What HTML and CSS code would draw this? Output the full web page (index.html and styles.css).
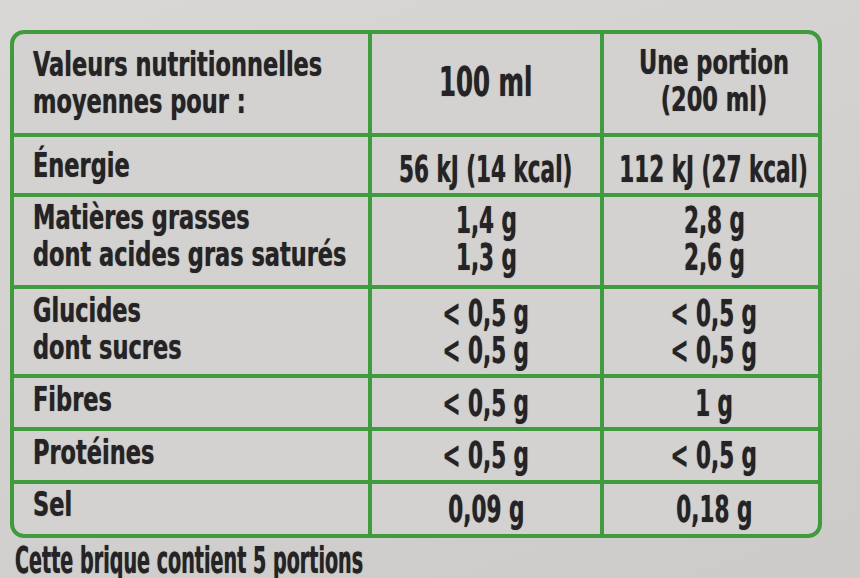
FILE: index.html
```html
<!DOCTYPE html>
<html lang="fr">
<head>
<meta charset="utf-8">
<title>Valeurs nutritionnelles</title>
<link rel="stylesheet" href="styles.css">
</head>
<body>
<div class="page">
  <div class="table">
    <div class="row r-head">
      <div class="cell lab"><span class="t">Valeurs nutritionnelles<br>moyennes pour :</span></div>
      <div class="cell val c2 mid"><span class="t big">100 ml</span></div>
      <div class="cell val c3 head3"><span class="t lbl">Une portion<br>(200 ml)</span></div>
    </div>
    <div class="row r-energy">
      <div class="cell lab"><span class="t">Énergie</span></div>
      <div class="cell val c2"><span class="t">56 kJ (14 kcal)</span></div>
      <div class="cell val c3"><span class="t">112 kJ (27 kcal)</span></div>
    </div>
    <div class="row r-fat">
      <div class="cell lab"><span class="t">Matières grasses<br>dont acides gras saturés</span></div>
      <div class="cell val c2"><span class="t">1,4 g<br>1,3 g</span></div>
      <div class="cell val c3"><span class="t">2,8 g<br>2,6 g</span></div>
    </div>
    <div class="row r-carb">
      <div class="cell lab"><span class="t">Glucides<br>dont sucres</span></div>
      <div class="cell val c2"><span class="t">&lt; 0,5 g<br>&lt; 0,5 g</span></div>
      <div class="cell val c3"><span class="t">&lt; 0,5 g<br>&lt; 0,5 g</span></div>
    </div>
    <div class="row r-fib">
      <div class="cell lab"><span class="t">Fibres</span></div>
      <div class="cell val c2"><span class="t">&lt; 0,5 g</span></div>
      <div class="cell val c3"><span class="t">1 g</span></div>
    </div>
    <div class="row r-prot">
      <div class="cell lab"><span class="t">Protéines</span></div>
      <div class="cell val c2"><span class="t">&lt; 0,5 g</span></div>
      <div class="cell val c3"><span class="t">&lt; 0,5 g</span></div>
    </div>
    <div class="row r-salt">
      <div class="cell lab"><span class="t">Sel</span></div>
      <div class="cell val c2"><span class="t">0,09 g</span></div>
      <div class="cell val c3"><span class="t">0,18 g</span></div>
    </div>
  </div>
  <p class="foot"><span class="t">Cette brique contient 5 portions</span></p>
</div>
</body>
</html>
```
FILE: styles.css
```css
html, body {
  margin: 0;
  padding: 0;
}
body {
  background: #d3d1cf;
  width: 860px;
  height: 578px;
  overflow: hidden;
  font-family: "DejaVu Sans Condensed", "DejaVu Sans", sans-serif;
  font-stretch: condensed;
  font-weight: bold;
  color: #252325;
}
.page {
  padding: 30px 0 0 10px;
  background: linear-gradient(160deg, #d9d7d5 0%, #d2d0ce 60%, #cdcbc9 100%);
  height: 548px;
}
.table {
  display: grid;
  grid-template-columns: 354px 228px 214px;
  grid-template-rows: 99px 56px 88px 85px 49px 49px 50px;
  gap: 4px;
  width: max-content;
  background: #3f9b3e;
  border: 4px solid #3f9b3e;
  border-radius: 14px;
  overflow: hidden;
}
.row {
  display: contents;
}
.cell {
  background: #d4d2d0;
  box-sizing: border-box;
  text-shadow: 0 0 1px rgba(30, 28, 30, 0.7);
}
.t {
  display: block;
  white-space: nowrap;
}
.lab {
  padding-left: 19px;
  font-size: 34px;
  line-height: 37px;
}
.lab .t {
  transform: scaleX(0.735);
  transform-origin: left top;
}
.val {
  display: flex;
  flex-direction: column;
  align-items: center;
  font-size: 38px;
  line-height: 37px;
  text-align: center;
}
.val .t {
  width: max-content;
  transform: scaleX(0.63);
  transform-origin: center top;
}
.c3 {
  padding-left: 6px;
}
.mid {
  justify-content: center;
}
.mid .t.big {
  font-size: 40px;
  transform: scaleX(0.68);
  padding-bottom: 2px;
}
.head3 .t.lbl {
  font-size: 34px;
  transform: scaleX(0.735);
}

/* per-row vertical offsets */
.r-head .lab { padding-top: 12px; }
.r-head .head3 { padding-top: 10px; }
.r-energy .lab { padding-top: 10px; }
.r-energy .val { padding-top: 14px; }
.r-fat .lab { padding-top: 2px; }
.r-fat .val { padding-top: 5px; }
.r-carb .lab { padding-top: 3px; }
.r-carb .val { padding-top: 6px; }
.r-fib .lab { padding-top: 3px; }
.r-fib .val { padding-top: 7px; }
.r-prot .lab { padding-top: 3px; }
.r-prot .val { padding-top: 6px; }
.r-salt .lab { padding-top: 2px; }
.r-salt .val { padding-top: 7px; }

.foot {
  margin: 0;
  padding: 2px 0 0 5px;
  font-size: 38px;
  line-height: 40px;
  text-shadow: 0 0 1px rgba(30, 28, 30, 0.7);
}
.foot .t {
  transform: scaleX(0.56);
  transform-origin: left top;
}
```
